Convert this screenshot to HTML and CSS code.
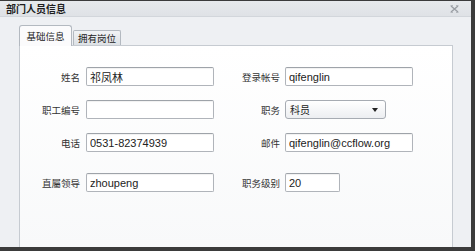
FILE: index.html
```html
<!DOCTYPE html>
<html lang="zh-CN">
<head>
    <meta charset="UTF-8">
    <title>部门人员信息</title>
    <link rel="stylesheet" href="styles.css">
</head>
<body>
    <div class="window">
        <div class="title-bar">
            <span class="title">部门人员信息</span>
            <span class="close">
                <svg width="9" height="8" viewBox="0 0 9 8">
                    <path d="M1 1 L8 7 M8 1 L1 7" stroke="#9a9ea4" stroke-width="1.4" fill="none"/>
                    <path d="M0.5 0.5 H3 M6 0.5 H8.5 M0.5 7.5 H3 M6 7.5 H8.5" stroke="#b5b9be" stroke-width="1" fill="none"/>
                </svg>
            </span>
        </div>

        <div class="content">
            <div class="tabs">
                <div class="tab active">基础信息</div>
                <div class="tab">拥有岗位</div>
            </div>

            <div class="panel">
                <div class="row">
                    <div class="field left">
                        <label>姓名</label>
                        <input class="text w-wide" type="text" value="祁凤林">
                    </div>
                    <div class="field right">
                        <label>登录帐号</label>
                        <input class="text w-wide" type="text" value="qifenglin">
                    </div>
                </div>

                <div class="row">
                    <div class="field left">
                        <label>职工编号</label>
                        <input class="text w-wide" type="text" value="">
                    </div>
                    <div class="field right">
                        <label>职务</label>
                        <div class="select">
                            <span>科员</span>
                            <span class="arrow"></span>
                        </div>
                    </div>
                </div>

                <div class="row">
                    <div class="field left">
                        <label>电话</label>
                        <input class="text w-wide" type="text" value="0531-82374939">
                    </div>
                    <div class="field right">
                        <label>邮件</label>
                        <input class="text w-wide" type="text" value="qifenglin@ccflow.org">
                    </div>
                </div>

                <div class="row last">
                    <div class="field left">
                        <label>直屬领导</label>
                        <input class="text w-wide" type="text" value="zhoupeng">
                    </div>
                    <div class="field right">
                        <label>职务级别</label>
                        <input class="text w-small" type="text" value="20">
                    </div>
                </div>
            </div>
        </div>
    </div>
</body>
</html>
```

FILE: styles.css
```css
body {
    margin: 0;
    width: 475px;
    height: 251px;
    background: #3b3b3b;
    font-family: "Liberation Sans", "Noto Sans CJK SC", sans-serif;
    overflow: hidden;
}
.window {
    margin-top: 1px;
    width: 471px;
    height: 246px;
    background: #eef0f3;
    display: flex;
    flex-direction: column;
}
.title-bar {
    height: 15px;
    background: linear-gradient(#e6e9ec, #dfe2e6);
    border-bottom: 1px solid #d2d6db;
    display: flex;
    align-items: center;
    justify-content: space-between;
    padding: 0 12px 0 6px;
}
.title {
    font-size: 10px;
    font-weight: bold;
    color: #1e1e1e;
}
.close {
    display: flex;
}
.content {
    flex: 1;
    display: flex;
    flex-direction: column;
    padding: 8px 18px 0 19px;
}
.tabs {
    display: flex;
    align-items: flex-end;
    height: 20px;
}
.tab {
    box-sizing: border-box;
    height: 15px;
    width: 48px;
    border: 1px solid #b3b9c0;
    border-bottom: none;
    border-radius: 2px 2px 0 0;
    background: linear-gradient(#f1f3f5, #dde1e5);
    font-size: 9.5px;
    color: #222;
    display: flex;
    align-items: center;
    justify-content: center;
    margin-left: 1px;
}
.tab.active {
    height: 21px;
    width: 53px;
    margin-left: 0;
    margin-bottom: -1px;
    background: #fbfbfc;
    position: relative;
    z-index: 1;
    border-radius: 3px 3px 0 0;
}
.panel {
    flex: 1;
    border: 1px solid #c6cbd1;
    border-bottom: none;
    background: linear-gradient(#ffffff, #f8f9fa);
    padding-top: 21px;
}
.row {
    display: flex;
    gap: 16px;
    margin-bottom: 14px;
}
.row.last {
    margin-top: 21px;
}
.field {
    display: flex;
    align-items: center;
}
.field label {
    font-size: 9.5px;
    color: #333;
    text-align: right;
}
.field.left label {
    width: 60px;
    margin-right: 6px;
}
.field.right label {
    width: 50px;
    margin-right: 5px;
}
.text {
    box-sizing: border-box;
    height: 19px;
    margin: 0;
    padding: 0 3px;
    border: 1px solid #b0b4ba;
    border-top-color: #9ea3a9;
    border-radius: 2px;
    background: #fff;
    box-shadow: inset 0 1px 1px rgba(0, 0, 0, 0.06);
    font-family: "Liberation Sans", "Noto Sans CJK SC", sans-serif;
    font-size: 11px;
    color: #222;
}
.w-wide {
    width: 128px;
}
.w-small {
    width: 55px;
}
.select {
    box-sizing: border-box;
    width: 101px;
    height: 19px;
    border: 1px solid #a6abb2;
    border-radius: 3px;
    background: linear-gradient(#ffffff, #eceef1);
    display: flex;
    align-items: center;
    justify-content: space-between;
    padding: 0 7px 0 4px;
    font-size: 10px;
    color: #222;
}
.arrow {
    width: 0;
    height: 0;
    border-left: 3px solid transparent;
    border-right: 3px solid transparent;
    border-top: 4px solid #222;
}
```
